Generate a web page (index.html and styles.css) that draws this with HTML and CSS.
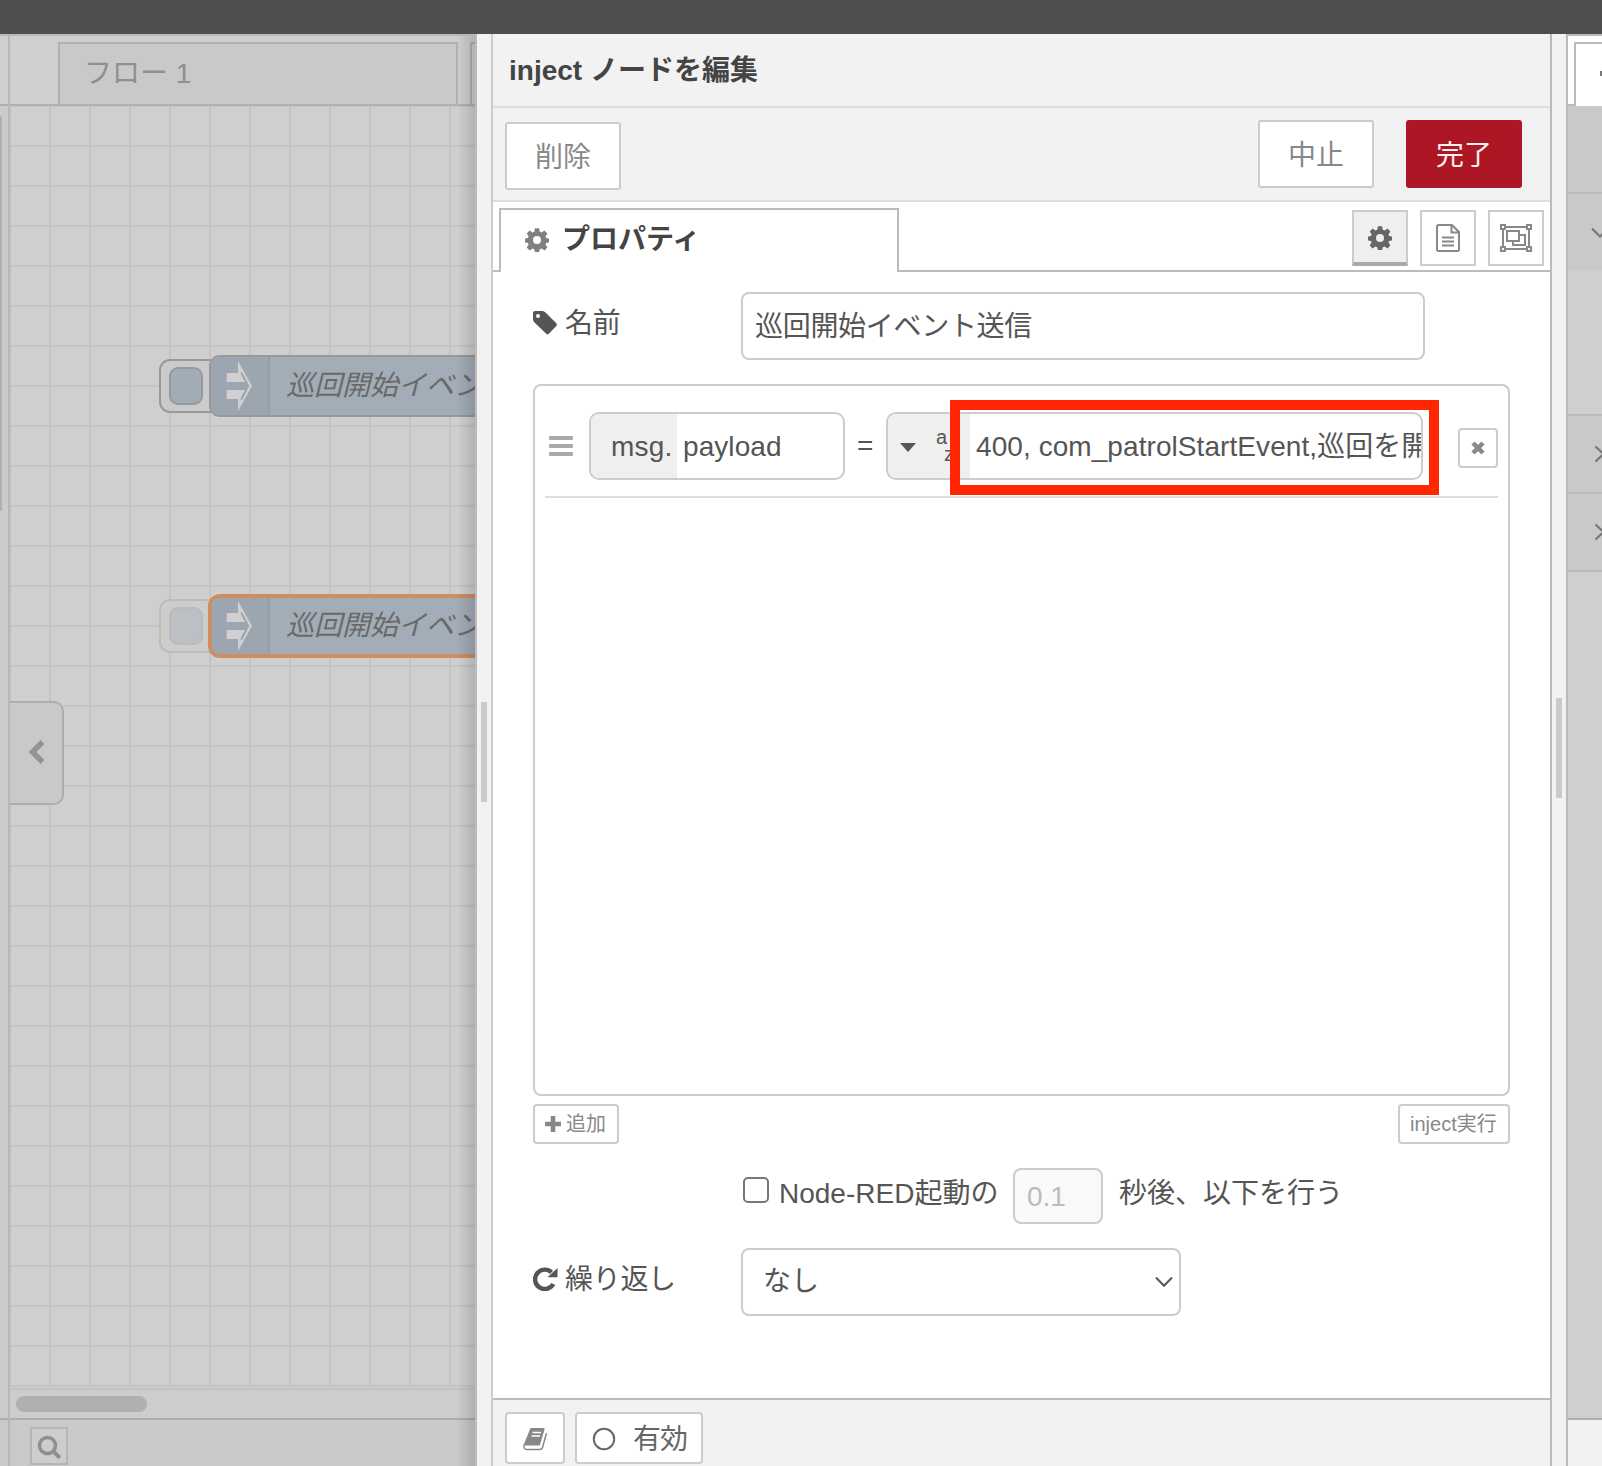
FILE: index.html
```html
<!DOCTYPE html>
<html lang="ja">
<head>
<meta charset="utf-8">
<title>Node-RED</title>
<link rel="stylesheet" href="styles.css">
</head>
<body>
<svg width="0" height="0" class="defs">
  <symbol id="gear" viewBox="0 0 24 24">
    <path fill-rule="evenodd" d="M9.9 0.3h4.2l.7 3.4 1.8.8 2.9-2 2.9 2.9-1.9 2.9.7 1.7 2.5.5q.3.1.3.4v3.1q0 .3-.4.4l-2.4.5-.7 1.7 1.9 2.9-2.9 2.9-2.9-1.9-1.8.7-.7 2.8q-.1.3-.4.3h-3.4q-.3 0-.4-.3l-.6-2.8-1.8-.7-2.9 1.9-2.9-2.9 1.9-2.9-.7-1.7-2.5-.5Q0 14.400 0 14.100V11q0-.4.4-.5l2.500-.5.700-1.700-1.900-2.900 2.900-2.900 2.900 2 1.800-.8zM12 8a4 4 0 1 0 0 8a4 4 0 1 0 0-8z"/>
  </symbol>
</svg>
<div class="app">
  <header class="topbar"></header>
  <div class="main">
    <div class="palette"><div class="palette-head"></div><div class="palette-body"></div><div class="palette-foot"></div></div>
    <section class="workspace">
      <div class="ws-tabs"><div class="ws-tab">フロー 1</div><div class="ws-tab-next"></div></div>
      <div class="canvas">
        <svg class="flow" width="465" height="1282" viewBox="10 106 465 1282">
          <defs>
            <pattern id="grid" x="49" y="145" width="40" height="40" patternUnits="userSpaceOnUse">
              <path d="M0 1H40M1 0V40" stroke="#c4c4c4" stroke-width="2" fill="none"/>
            </pattern>
            <g id="arrow">
              <path d="M226.700 373H238V361L252 386L238 411V399H226.700V390H238.500V382H226.700Z" fill="#d0d0d0"/>
              <path d="M238 382H245L240.500 373.500L241.800 371.500L249.300 386L241.800 400.500L240.500 398.500L245 390H238Z" fill="#9ba6b0"/>
            </g>
          </defs>
          <rect x="10" y="106" width="465" height="1282" fill="url(#grid)"/>
          <rect x="160" y="360" width="64" height="52" rx="10" fill="#cbcbcb" stroke="#999" stroke-width="2"/>
          <rect x="170" y="368" width="32" height="36" rx="8" fill="#a1acb6" stroke="#999" stroke-width="2"/>
          <rect x="210" y="356" width="300" height="60" rx="10" fill="#a3adb7" stroke="#999" stroke-width="2"/>
          <path d="M269 357V415H220Q211 415 211 406V366Q211 357 220 357Z" fill="#9ba6b0"/>
          <path d="M269 357V415" stroke="#949ea7" stroke-width="2"/>
          <use href="#arrow"/>
          <text x="286" y="395" class="node-label">巡回開始イベン</text>
          <rect x="160" y="600" width="64" height="52" rx="10" fill="#cdcdcd" stroke="#bcbcbc" stroke-width="2"/>
          <rect x="170" y="608" width="32" height="36" rx="8" fill="#bcc0c5" stroke="#b8babc" stroke-width="2"/>
          <rect x="210" y="596" width="300" height="60" rx="10" fill="#a3adb7" stroke="#cf8d62" stroke-width="4"/>
          <path d="M269 598V654H220Q212 654 212 646V606Q212 598 220 598Z" fill="#9ba6b0"/>
          <path d="M269 598V654" stroke="#949ea7" stroke-width="2"/>
          <use href="#arrow" y="240"/>
          <text x="286" y="635" class="node-label">巡回開始イベン</text>
        </svg>
        <div class="collapse"><svg width="18" height="26" viewBox="0 0 18 26"><path d="M14.500 2L4.500 12L14.500 22" fill="none" stroke="#939393" stroke-width="5.500"/></svg></div>
      </div>
      <div class="hscroll"><div class="thumb"></div></div>
      <div class="ws-foot"><div class="search"><svg width="26" height="26" viewBox="0 0 26 26"><circle cx="11.500" cy="12.500" r="8" fill="none" stroke="#8f8f8f" stroke-width="3.500"/><path d="M17.500 18.500L22.500 23.500" stroke="#8f8f8f" stroke-width="4" stroke-linecap="round"/></svg></div></div>
      <div class="edge-shade"></div>
    </section>
    <div class="tray-sep"><div class="grip"></div></div>
    <section class="tray">
      <div class="tray-title">inject ノードを編集</div>
      <div class="tray-tools">
        <button class="btn delete">削除</button>
        <button class="btn cancel">中止</button>
        <button class="btn done">完了</button>
      </div>
      <div class="tray-tabs">
        <div class="tab-gap"></div>
        <div class="tab"><svg width="24" height="24" fill="#808080"><use href="#gear"/></svg><span>プロパティ</span></div>
        <div class="tab-rest">
          <div class="tool active"><svg width="24" height="24" fill="#666"><use href="#gear"/></svg></div>
          <div class="tool"><svg width="24" height="28" viewBox="0 0 24 28" fill="none" stroke="#888" stroke-width="2"><path d="M2.500 1H16L23 8V25.500Q23 27 21.500 27H2.500Q1 27 1 25.500V2.500Q1 1 2.500 1ZM15.500 1V8.500H23M6 13.500H18M6 17.500H18M6 21.500H18"/></svg></div>
          <div class="tool"><svg width="32" height="28" viewBox="0 0 32 28" fill="none" stroke="#888" stroke-width="2"><path d="M6 3H26M6 25H26M3 6V22M29 6V22M1 1H5V5H1ZM27 1H31V5H27ZM1 23H5V27H1ZM27 23H31V27H27ZM7 7H19V17H7ZM19 11H25V21H13V17"/></svg></div>
        </div>
      </div>
      <div class="tray-body">
        <div class="row name-row">
          <label class="label"><svg width="24" height="24" viewBox="0 0 24 24"><path fill="#555" fill-rule="evenodd" d="M0 2Q0 0 2 0H9.500Q11 0 12.500 1.500L23.300 12.300Q24.500 13.600 23.300 14.900L15.800 22.800Q14.500 24 13.200 22.800L1.500 11.500Q0 10 0 8.500ZM5 3A2 2 0 1 0 5 7A2 2 0 1 0 5 3Z"/></svg><span>名前</span></label>
          <div class="field name-field">巡回開始イベント送信</div>
        </div>
        <div class="list">
          <div class="item">
            <div class="handle"><i></i><i></i><i></i></div>
            <div class="typed prop"><span class="type">msg.</span><span class="val">payload</span></div>
            <span class="eq">=</span>
            <div class="typed value">
              <span class="type"><svg width="16" height="9" viewBox="0 0 16 9"><path d="M0 0H16L8 9Z" fill="#555"/></svg><span class="az"><span>a</span><span>z</span></span></span>
              <span class="val">400, com_patrolStartEvent,巡回を開</span>
              <div class="highlight"></div>
            </div>
            <button class="remove"><svg width="14" height="14" viewBox="0 0 14 14"><path d="M2 2L12 12M12 2L2 12" stroke="#888" stroke-width="4.500"/></svg></button>
          </div>
        </div>
        <div class="list-tools">
          <button class="small add"><svg width="16" height="16" viewBox="0 0 16 16"><path d="M8 0V16M0 8H16" stroke="#888" stroke-width="4.600"/></svg>追加</button>
          <button class="small run">inject実行</button>
        </div>
        <div class="row once-row">
          <span class="check"></span><span class="once-a">Node-RED起動の</span><span class="delay">0.1</span><span class="once-b">秒後、以下を行う</span>
        </div>
        <div class="row repeat-row">
          <label class="label"><svg width="25" height="24" viewBox="0 0 25 24"><path d="M20.300 17A9.700 9.700 0 1 1 18.500 5.300" fill="none" stroke="#555" stroke-width="4.400"/><path d="M24.500 1V10.300H14.500Z" fill="#555"/></svg><span>繰り返し</span></label>
          <div class="field select">なし<svg width="18" height="12" viewBox="0 0 18 12"><path d="M1 1.500L9 9.800L17 1.500" fill="none" stroke="#555" stroke-width="2"/></svg></div>
        </div>
      </div>
      <div class="tray-foot">
        <button class="fbtn book"><svg width="24" height="24" viewBox="0 0 24 24"><path d="M7.500 1H20.500Q22 1 21.500 2.700L16.800 18.500H2.500Q1 18.500 1 17Z" fill="#888"/><path d="M9.500 5.500H18M8.500 9H17" stroke="#fff" stroke-width="1.500"/><path d="M1 17.500Q.5 22.500 3.500 22.500H17Q19 22.500 19.500 20.500L23.500 6" fill="none" stroke="#888" stroke-width="1.500"/></svg></button>
        <button class="fbtn enable"><svg width="24" height="24" viewBox="0 0 24 24"><circle cx="12" cy="12" r="10.200" fill="none" stroke="#666" stroke-width="2"/></svg><span>有効</span></button>
      </div>
    </section>
    <div class="side-sep"><div class="grip"></div></div>
    <aside class="sidebar">
      <div class="side-tabs"><div class="side-gap"></div><div class="side-tab"></div></div>
      <div class="side-tools"></div>
      <div class="side-head open"><svg width="18" height="12" viewBox="0 0 18 12"><path d="M1 1.500L9 9.500L17 1.500" fill="none" stroke="#777" stroke-width="2.200"/></svg></div>
      <div class="side-content"></div>
      <div class="side-head"><svg width="12" height="18" viewBox="0 0 12 18"><path d="M1.500 1.500L9.500 9L1.500 16.500" fill="none" stroke="#777" stroke-width="2.200"/></svg></div>
      <div class="side-head"><svg width="12" height="18" viewBox="0 0 12 18"><path d="M1.500 1.500L9.500 9L1.500 16.500" fill="none" stroke="#777" stroke-width="2.200"/></svg></div>
      <div class="side-fill"></div>
      <div class="side-foot"></div>
    </aside>
  </div>
</div>
</body>
</html>
```
FILE: styles.css
```css
* { box-sizing: border-box; }
body { margin: 0; font: 28px/68px "Liberation Sans", "Noto Sans CJK JP", sans-serif; color: #555; }
button { font: inherit; color: inherit; padding: 0; margin: 0; }
svg { display: block; flex: none; }
.defs { position: absolute; }
.app { width: 1602px; height: 1466px; display: flex; flex-direction: column; overflow: hidden; background: #fff; }
.topbar { height: 34px; flex: none; background: #4f4f4f; }
.main { flex: 1; display: grid; grid-template-columns: 10px 467px 14px 1061px 14px 36px; min-height: 0; }

/* Dimmed palette edge and workspace */
.palette { background: #cbcbcb; border-top: 2px solid #b7b7b7; border-right: 2px solid #b7b7b7; display: flex; flex-direction: column; }
.palette-head { height: 70px; background: #cfcfcf; border-bottom: 2px solid #b0b0b0; }
.palette-body { height: 395px; margin-top: 10px; width: 2px; background: #b0b0b0; border-radius: 0 2px 0 0; }
.palette-foot { margin-top: auto; height: 48px; border-top: 2px solid #adadad; background: #c9c9c9; }
.workspace { position: relative; background: #cfcfcf; border-top: 2px solid #b7b7b7; border-right: 2px solid #bbb; display: flex; flex-direction: column; overflow: hidden; }
.ws-tabs { height: 70px; flex: none; display: flex; padding: 6px 0 0 48px; border-bottom: 2px solid #b1b1b1; overflow: hidden; }
.ws-tab { width: 400px; flex: none; height: 62px; border: 2px solid #b1b1b1; border-bottom: 0; background: #c9c9c9; padding-left: 24px; line-height: 60px; color: #8f8f8f; }
.ws-tab-next { width: 10px; flex: none; height: 64px; margin-left: 12px; border: 2px solid #b1b1b1; border-width: 2px 0 0 2px; background: #cfcfcf; }
.canvas { position: relative; height: 1282px; flex: none; }
.node-label { font-size: 28px; font-style: italic; fill: #6a6a6a; }
.collapse { position: absolute; left: 0; top: 595px; width: 54px; height: 104px; border: 2px solid #adadad; border-left: 0; border-radius: 0 10px 10px 0; background: #c9c9c9; display: flex; align-items: center; padding-left: 18px; }
.hscroll { height: 30px; flex: none; border-top: 2px solid #c2c2c2; padding: 6px; background: #cdcdcd; }
.thumb { width: 131px; height: 16px; border-radius: 8px; background: #b0b0b0; }
.ws-foot { flex: 1; background: #c9c9c9; border-top: 2px solid #adadad; padding: 7px 20px; }
.search { width: 38px; height: 38px; border: 2px solid #b5b5b5; background: #cdcdcd; display: grid; place-items: center; }
.edge-shade { position: absolute; right: 0; top: 0; bottom: 0; width: 18px; background: linear-gradient(90deg, rgba(0,0,0,0), rgba(0,0,0,.14)); }

/* Separators */
.tray-sep, .side-sep { background: #f2f2f2; padding-left: 4px; }
.grip { width: 6px; height: 100px; background: #cbcbcb; margin-top: 668px; }
.side-sep .grip { margin-top: 664px; }

/* Edit tray */
.tray { display: flex; flex-direction: column; border: solid #bbb; border-width: 0 2px; border-left-color: #ccc; background: #fff; min-width: 0; }
.tray-title { height: 74px; line-height: 74px; flex: none; padding-left: 16px; background: #f2f2f2; border-bottom: 2px solid #ddd; font-weight: bold; color: #444; }
.tray-tools { height: 94px; flex: none; display: flex; align-items: flex-start; padding: 12px 28px 0 12px; background: #f2f2f2; border-bottom: 2px solid #ddd; }
.btn { width: 116px; height: 68px; line-height: 64px; padding-top: 2px; border: 2px solid #ccc; border-radius: 3px; background: #fff; color: #888; }
.delete { margin: 2px auto 0 0; }
.done { margin-left: 32px; background: #ad1625; border-color: #ad1625; color: #fee; }
.tray-tabs { height: 70px; flex: none; display: flex; padding-top: 6px; }
.tab-gap { width: 7px; border-bottom: 2px solid #bbb; }
.tab { width: 400px; margin-left: -1px; border: 2px solid #bbb; border-bottom: 0; display: flex; align-items: center; padding: 0 0 3px 24px; gap: 13px; line-height: 60px; font-weight: bold; color: #444; }
.tab-rest { flex: 1; border-bottom: 2px solid #bbb; display: flex; justify-content: flex-end; gap: 12px; padding: 2px 6px 0 0; }
.tool { width: 56px; height: 56px; border: 2px solid #ccc; display: grid; place-items: center; }
.tool.active { background: #efefef; border-bottom: 4px solid #aaa; padding-top: 2px; }
.tray-body { flex: 1; padding: 20px 40px 0; display: flex; flex-direction: column; }
.row { display: flex; flex: none; }
.label { width: 208px; display: flex; align-items: center; gap: 8px; height: 61px; line-height: 61px; }
.label span { padding-top: 2px; letter-spacing: -.3px; }
.field { height: 68px; border: 2px solid #ccc; border-radius: 8px; line-height: 66px; background: #fff; }
.name-field { width: 684px; padding-left: 12px; letter-spacing: -.3px; }
.list { height: 712px; flex: none; width: 977px; margin-top: 24px; border: 2px solid #ccc; border-radius: 8px; padding: 10px; }
.item { height: 102px; border-bottom: 2px solid #ddd; display: flex; align-items: flex-start; padding-top: 16px; }
.handle { width: 24px; margin: 24px 16px 0 4px; display: flex; flex-direction: column; gap: 4px; }
.handle i { height: 4px; border-radius: 1px; background: #aaa; }
.typed { position: relative; height: 68px; border: 2px solid #ccc; border-radius: 10px; display: flex; line-height: 65px; background: #fff; }
.type { flex: none; background: #efefef; border-radius: 8px 0 0 8px; display: flex; align-items: center; }
.prop { width: 256px; }
.prop .type { width: 86px; padding-left: 20px; letter-spacing: .2px; }
.val { padding-left: 6px; overflow: hidden; white-space: nowrap; letter-spacing: .07px; }
.eq { width: 41px; padding-left: 12px; line-height: 68px; }
.value { width: 537px; margin-right: 1px; }
.value .type { width: 82px; padding: 3px 0 0 12px; }
.value .val { line-height: 66px; }
.az { display: flex; flex-direction: column; width: 24px; margin: -3px 0 0 20px; font-size: 20px; line-height: 17px; }
.az span + span { padding-left: 8px; }
.highlight { position: absolute; left: 62px; top: -14px; width: 489px; height: 95px; border: 10px solid #ff2600; }
.remove { width: 40px; height: 40px; margin: 16px 0 0 auto; border: 2px solid #ccc; border-radius: 4px; background: #fff; display: grid; place-items: center; }
.list-tools { display: flex; justify-content: space-between; flex: none; width: 977px; margin-top: 8px; }
.small { height: 40px; border: 2px solid #ccc; border-radius: 4px; background: #fff; color: #888; font-size: 20px; line-height: 36px; padding: 0 10px; display: flex; align-items: center; gap: 5px; }
.add { width: 86px; }
.run { width: 112px; }
.once-row { margin-top: 24px; padding-left: 210px; line-height: 51px; }
.check { width: 26px; height: 26px; margin: 9px 10px 0 0; border: 2px solid #767676; border-radius: 5px; }
.once-a { width: 234px; white-space: nowrap; }
.delay { width: 90px; height: 56px; border: 2px solid #ccc; border-radius: 8px; background: #f9f9f9; color: #bbb; line-height: 54px; padding-left: 12px; margin-right: 16px; }
.repeat-row { margin-top: 24px; }
.repeat-row .label { gap: 7px; }
.select { width: 440px; padding: 0 6px 0 20px; display: flex; align-items: center; justify-content: space-between; }
.tray-foot { height: 68px; flex: none; border-top: 2px solid #bbb; background: #f2f2f2; display: flex; gap: 10px; padding: 12px; }
.fbtn { height: 52px; border: 2px solid #ccc; border-radius: 4px; background: #fff; display: flex; align-items: center; line-height: 48px; color: #666; }
.book { width: 60px; justify-content: center; padding-top: 2px; }
.enable { width: 128px; padding: 2px 0 0 15px; gap: 17px; }
.enable span { padding-top: 2px; letter-spacing: -1px; }

/* Right sidebar edge */
.sidebar { border-left: 2px solid #bbb; display: flex; flex-direction: column; background: #cfcfcf; overflow: hidden; }
.side-tabs { height: 72px; flex: none; border-top: 2px solid #bbb; background: #fff; display: flex; padding-top: 6px; }
.side-gap { width: 7px; border-bottom: 2px solid #bbb; }
.side-tab { width: 28px; margin-left: -1px; border: 2px solid #bbb; border-width: 2px 0 0 2px; background: linear-gradient(#777, #777) 24px 27px / 4px 5px no-repeat; }
.side-tools { height: 88px; flex: none; background: #c9c9c9; border-bottom: 2px solid #bbb; }
.side-head { height: 78px; flex: none; background: #c9c9c9; border-bottom: 2px solid #bbb; display: flex; align-items: center; padding-left: 26px; }
.side-head.open { height: 76px; border: 0; padding: 2px 0 0 23px; }
.side-content { height: 146px; flex: none; border-bottom: 2px solid #bbb; }
.side-fill { flex: 1; }
.side-foot { height: 48px; background: #f2f2f2; border-top: 2px solid #adadad; }
```
